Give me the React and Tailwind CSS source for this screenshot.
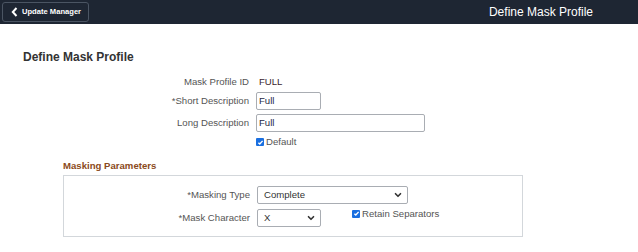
import React from 'react';

const font = { fontFamily: '"Liberation Sans", Arial, sans-serif' };

const Chevron = () => (
  <svg width="10" height="10" viewBox="0 0 24 24" fill="none" stroke="currentColor" strokeWidth="4" strokeLinecap="round" strokeLinejoin="round">
    <path d="M6 9l6 6 6-6" />
  </svg>
);

const Check = () => (
  <span className="w-[8px] h-[8px] bg-[#1a6fe0] rounded-[1px] flex items-center justify-center shrink-0">
    <svg width="7" height="7" viewBox="0 0 10 10" fill="none" stroke="white" strokeWidth="2">
      <path d="M2 5.2l2 2 4-4.5" />
    </svg>
  </span>
);

const Row = ({ label, w = 'w-[256px]', h, className = '', children }) => (
  <div className={`flex items-center ${h} ${className}`}>
    <div className={`${w} shrink-0 text-right text-[9.6px] text-[#555] pr-[7px] whitespace-nowrap`}>{label}</div>
    {children}
  </div>
);

const Box = ({ w, children, select }) => (
  <div className={`${w} h-[18px] border border-[#a9adb3] rounded-[2px] text-[9.6px] flex items-center ${select ? 'justify-between pl-[6px] pr-[4px] text-[#333]' : 'pl-[2px] text-[#1f2a44]'}`}>
    {children}
    {select && <Chevron />}
  </div>
);

export default function App() {
  return (
    <div className="w-[638px] h-[252px] bg-white overflow-hidden" style={font}>
      {/* header */}
      <div className="h-[24px] bg-[#1e2633] flex items-center justify-between pl-[2px] pr-[45px]">
        <button className="h-[20px] w-[87px] border border-[#4b5563] rounded-[3px] flex items-center gap-[4px] pl-[8px] text-white text-[7.6px] font-bold whitespace-nowrap">
          <svg width="7" height="10" viewBox="0 0 7 10" fill="none" stroke="white" strokeWidth="2">
            <path d="M5.5 1L1.8 5l3.7 4" />
          </svg>
          Update Manager
        </button>
        <div className="text-white text-[12px]">Define Mask Profile</div>
      </div>

      <div className="pt-[26px] pl-[23px] h-[51px]">
        <h1 className="text-[12px] font-bold text-[#333] leading-[14px]">Define Mask Profile</h1>
      </div>

      {/* fields */}
      <div className="flex flex-col">
        <Row label="Mask Profile ID" h="h-[14px]">
          <div className="text-[9.6px] text-[#3a2530] pl-[3px]">FULL</div>
        </Row>
        <Row label="*Short Description" h="h-[18px]" className="mt-[3px]">
          <Box w="w-[65px]">Full</Box>
        </Row>
        <Row label="Long Description" h="h-[18px]" className="mt-[4px]">
          <Box w="w-[169px]">Full</Box>
        </Row>
        <Row label="" h="h-[14px]" className="mt-[3px]">
          <div className="flex items-center gap-[2px] text-[9.6px] text-[#555]">
            <Check />
            Default
          </div>
        </Row>
      </div>

      {/* masking parameters */}
      <div className="pl-[63px] mt-[11px]">
        <div className="text-[9.6px] font-bold text-[#8b4a20] h-[12px] leading-[12px]">Masking Parameters</div>
        <div className="w-[460px] h-[62px] border border-[#d3d7db] mt-[3px] pt-[10px] flex flex-col">
          <Row label="*Masking Type" w="w-[193px]" h="h-[18px]">
            <Box w="w-[151px]" select>Complete</Box>
          </Row>
          <Row label="*Mask Character" w="w-[193px]" h="h-[18px]" className="mt-[5px]">
            <Box w="w-[64px]" select>X</Box>
            <div className="flex items-center gap-[2px] text-[9.6px] text-[#555] whitespace-nowrap ml-[31px] -mt-[8px]">
              <Check />
              Retain Separators
            </div>
          </Row>
        </div>
      </div>
    </div>
  );
}
